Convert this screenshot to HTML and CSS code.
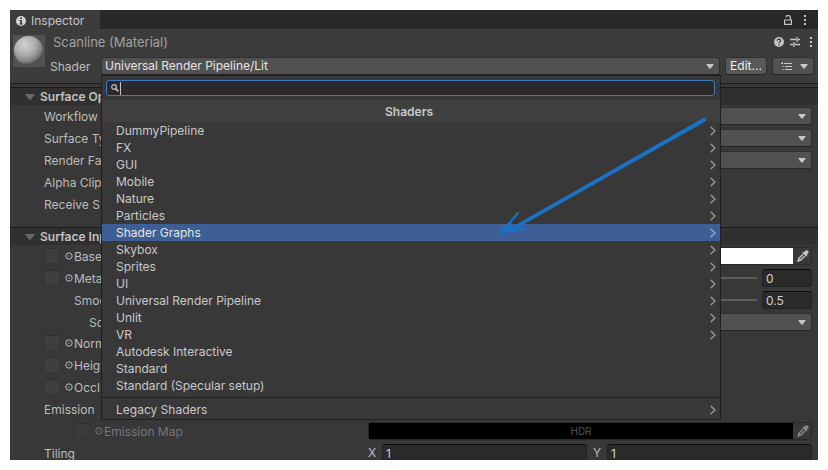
FILE: index.html
```html
<!DOCTYPE html>
<html lang="en">
<head>
<meta charset="utf-8">
<title>Inspector</title>
<meta name="viewport" content="width=device-width, initial-scale=1">
<link rel="stylesheet" href="styles.css">
</head>
<body>
<svg class="defs" aria-hidden="true">
  <symbol id="down" viewBox="0 0 8 5"><path d="M0 0h8L4.6 4.6h-1.2z"/></symbol>
  <symbol id="chev" viewBox="0 0 6 10"><path d="M.7.9 5 5 .7 9.1" fill="none" stroke="currentColor" stroke-width="1.5"/></symbol>
  <symbol id="dots" viewBox="0 0 2 10"><path d="M0 0h2v2H0zM0 4h2v2H0zM0 8h2v2H0z"/></symbol>
  <symbol id="target" viewBox="0 0 8 8"><circle cx="4" cy="4" r="3.2" fill="none" stroke="currentColor"/><circle cx="4" cy="4" r=".7"/></symbol>
  <symbol id="picker" viewBox="0 0 12 12"><path d="M8 .9C9.2-.2 10.400 0 11 .8s1 1.900-.1 3L9.700 5l.7.7-1.100 1.100L5.200 2.700l1.100-1.100.7.7z"/><path d="M5.900 4.300 1.900 8.300l-.6 2.400 2.400-.6 4-4" fill="none" stroke="currentColor" stroke-width="1.500"/><path d="M0 11.200h1.500V12H0z"/></symbol>
</svg>
<main class="panel">
  <div class="tabs">
    <a class="tab" href="#inspector">
      <svg width="10" height="10" viewBox="0 0 10 10"><circle cx="5" cy="5" r="5" fill="#d2d2d2"/><path d="M4.200 1.500h1.700v1.600H4.200zM3.500 4h2.400v3.400h.8v1H3.400v-1h.9V5h-.8z" fill="#333"/></svg>
      Inspector
    </a>
    <div class="tools">
      <button aria-label="Lock"><svg width="8" height="10" viewBox="0 0 8 10"><path d="M.6 5h6.800v4.400H.6zM6.400 5V2.200Q6.400.6 4.700.6H3.600Q2 .6 2 2.200" fill="none" stroke="currentColor" stroke-width="1.200"/></svg></button>
      <button aria-label="Tab menu"><svg width="2" height="10"><use href="#dots"/></svg></button>
    </div>
  </div>

  <header class="head">
    <svg class="preview" viewBox="0 0 32 32" aria-hidden="true">
      <defs><radialGradient id="ball" cx=".38" cy=".3" r=".72"><stop offset="0" stop-color="#d2d2d0"/><stop offset=".5" stop-color="#acacac"/><stop offset=".82" stop-color="#808080"/><stop offset="1" stop-color="#454545"/></radialGradient></defs>
      <rect width="32" height="32" fill="#525252"/><circle cx="15.500" cy="15.500" r="14.500" fill="url(#ball)"/>
    </svg>
    <div class="head-main">
      <div class="title-row">
        <h1>Scanline (Material)</h1>
        <button aria-label="Help"><svg width="10" height="10" viewBox="0 0 10 10"><circle cx="5" cy="5" r="5"/><path d="M3.300 3.700C3.300 1.600 6.700 1.600 6.700 3.600 6.700 4.800 5 4.800 5 6.200M5 7.200v1.200" fill="none" stroke="#383838" stroke-width="1.200"/></svg></button>
        <button aria-label="Presets"><svg width="10" height="10" viewBox="0 0 10 10"><path d="M0 2.500h6M8 2.500h2M0 7.500h3M5 7.500h5M7 0v5M4 5v5" fill="none" stroke="currentColor" stroke-width="1.300"/></svg></button>
        <button aria-label="Material menu"><svg width="2" height="10"><use href="#dots"/></svg></button>
      </div>
      <div class="shader-row">
        <label for="shader">Shader</label>
        <div class="shader-field">
          <div class="drop"><select id="shader"><option>Universal Render Pipeline/Lit</option></select><svg><use href="#down"/></svg></div>
          <div class="popup">
            <div class="search">
              <svg width="8" height="8" viewBox="0 0 8 8"><circle cx="3" cy="3" r="2.300" fill="none" stroke="currentColor" stroke-width="1.200"/><path d="m4.700 4.700 2.700 2.700" stroke="currentColor" stroke-width="1.500"/></svg>
              <i class="caret"></i>
              <input type="text" aria-label="Search shaders">
            </div>
            <h2>Shaders</h2>
            <div class="menu">
              <button>DummyPipeline<svg><use href="#chev"/></svg></button>
              <button>FX<svg><use href="#chev"/></svg></button>
              <button>GUI<svg><use href="#chev"/></svg></button>
              <button>Mobile<svg><use href="#chev"/></svg></button>
              <button>Nature<svg><use href="#chev"/></svg></button>
              <button>Particles<svg><use href="#chev"/></svg></button>
              <button class="selected">Shader Graphs<svg><use href="#chev"/></svg></button>
              <button>Skybox<svg><use href="#chev"/></svg></button>
              <button>Sprites<svg><use href="#chev"/></svg></button>
              <button>UI<svg><use href="#chev"/></svg></button>
              <button>Universal Render Pipeline<svg><use href="#chev"/></svg></button>
              <button>Unlit<svg><use href="#chev"/></svg></button>
              <button>VR<svg><use href="#chev"/></svg></button>
              <button>Autodesk Interactive</button>
              <button>Standard</button>
              <button>Standard (Specular setup)</button>
            </div>
            <div class="menu legacy"><button>Legacy Shaders<svg><use href="#chev"/></svg></button></div>
            <svg class="arrow" viewBox="0 0 210 120" aria-hidden="true"><path d="M206 .5Q209 2 207.500 4.500L15 113.500 13 110.500z"/><path d="M3 115.500 20 96M3 115.500 28 111.500" fill="none" stroke="currentColor" stroke-width="2.200" stroke-linecap="round"/><path d="m2 116.500 11-12 2 6 7 1.500-4 2z"/></svg>
          </div>
        </div>
        <button class="btn edit">Edit...</button>
        <button class="btn list" aria-label="Shader list"><svg width="11" height="9" viewBox="0 0 11 9"><path d="M3 1.500h8M4 4.500h7M4 7.500h7M0 1.500h2M1.500 0v2M1.500 4.500h1M1.500 7.500h1" fill="none" stroke="currentColor"/></svg><svg width="8" height="5"><use href="#down"/></svg></button>
      </div>
    </div>
  </header>

  <section>
    <h2 class="fold"><svg><use href="#down"/></svg>Surface Op</h2>
    <div class="rows">
      <div class="row"><label for="mode">Workflow</label><div class="drop"><select id="mode"></select><svg><use href="#down"/></svg></div></div>
      <div class="row"><label for="type">Surface Ty</label><div class="drop"><select id="type"></select><svg><use href="#down"/></svg></div></div>
      <div class="row"><label for="face">Render Fa</label><div class="drop"><select id="face"></select><svg><use href="#down"/></svg></div></div>
      <div class="row"><span>Alpha Clip</span></div>
      <div class="row"><span>Receive S</span></div>
    </div>
  </section>

  <section class="inputs">
    <h2 class="fold"><svg><use href="#down"/></svg>Surface Inp</h2>
    <div class="rows">
      <div class="row"><div class="tex"><button class="slot" aria-label="Base map"></button><svg><use href="#target"/></svg><span>Base</span></div><div class="color"><button class="swatch" aria-label="Base color"></button><button class="pick" aria-label="Pick base color"><svg><use href="#picker"/></svg></button></div></div>
      <div class="row"><div class="tex"><button class="slot" aria-label="Metallic map"></button><svg><use href="#target"/></svg><span>Meta</span></div><div class="slide"><i></i><input type="text" aria-label="Metallic" value="0"></div></div>
      <div class="row"><label class="in2" for="smooth">Smoo</label><div class="slide"><i></i><input type="text" id="smooth" value="0.5"></div></div>
      <div class="row source"><label class="in3" for="source">So</label><div class="drop"><select id="source"></select><svg><use href="#down"/></svg></div></div>
      <div class="row"><div class="tex"><button class="slot" aria-label="Normal map"></button><svg><use href="#target"/></svg><span>Norm</span></div></div>
      <div class="row"><div class="tex"><button class="slot" aria-label="Height map"></button><svg><use href="#target"/></svg><span>Heig</span></div></div>
      <div class="row"><div class="tex"><button class="slot" aria-label="Occlusion map"></button><svg><use href="#target"/></svg><span>Occl</span></div></div>
      <div class="row"><span>Emission</span></div>
      <div class="row off"><div class="tex in2"><button class="slot" aria-label="Emission texture"></button><svg><use href="#target"/></svg><span>Emission Map</span></div><div class="color"><button class="swatch">HDR</button><button class="pick" aria-label="Pick emission color"><svg><use href="#picker"/></svg></button></div></div>
      <div class="row"><span>Tiling</span><div class="vec"><label for="tx">X</label><input type="text" id="tx" value="1"><label for="ty">Y</label><input type="text" id="ty" value="1"></div></div>
    </div>
  </section>
</main>
</body>
</html>
```
FILE: styles.css
```css
* { box-sizing: border-box; }
body {
  margin: 0;
  padding: 10px;
  background: #fff;
  color: #bcbcbc;
  font: 12px/16px Inter, "Liberation Sans", sans-serif;
}
h1, h2 { margin: 0; font-size: 12px; }
button, input, select { font: inherit; color: inherit; margin: 0; padding: 0; border: 0; background: none; outline: 0; }
svg { display: block; fill: currentColor; flex: none; }
.defs { display: none; }

.panel { height: calc(100vh - 20px); overflow: hidden; background: #383838; }

.tabs { display: flex; justify-content: space-between; height: 19px; background: #282828; }
.tab {
  display: flex; align-items: center; gap: 5px;
  width: 90px; padding: 2px 0 0 6px;
  background: #3c3c3c; color: #c4c4c4; text-decoration: none;
}
.tools { display: flex; align-items: center; gap: 12px; padding-right: 12px; color: #c4c4c4; }

.head { display: flex; gap: 5px; height: 55px; padding: 5px 4px 0 3px; background: #3c3c3c; border-bottom: 1px solid #1a1a1a; }
.preview { width: 32px; height: 32px; margin-top: 1px; }
.head-main { flex: 1; min-width: 0; }
.title-row { display: flex; align-items: center; gap: 6px; height: 16px; padding: 0 2px 0 3px; color: #c4c4c4; }
.title-row h1 { flex: 1; font-size: 13px; font-weight: 400; color: #a0a0a0; }
.title-row button:last-child { margin-left: 4px; }
.shader-row { display: flex; gap: 5px; margin-top: 7px; }
.shader-row > label { width: 46px; padding-top: 2px; }
.shader-field { position: relative; flex: 1; }

.drop { position: relative; height: 18px; }
.drop select {
  display: block; width: 100%; height: 18px; padding-left: 4px;
  appearance: none; background: #515151; color: #e4e4e4;
  border: 1px solid #303030; border-bottom-color: #242424; border-radius: 3px;
}
.drop svg { position: absolute; right: 6px; top: 7px; width: 8px; height: 5px; color: #c8c8c8; }
.shader-field .drop select { padding-left: 3px; }
.btn {
  width: 43px; height: 18px; background: #585858; color: #eee;
  border: 1px solid #303030; border-bottom-color: #242424; border-radius: 3px;
}
.shader-row .btn { width: 42px; }
.list { display: flex; align-items: center; justify-content: space-between; padding: 0 5px 0 8px; color: #c8c8c8; background: #515151; }

.popup {
  position: absolute; z-index: 2; top: 18px; left: 0; right: -1px;
  padding-top: 4px; background: #383838; border: 1px solid #202020;
}
.search {
  display: flex; align-items: center; gap: 1px; height: 16px; margin: 0 5px 4px 4px; padding-left: 4px;
  background: #2a2a2a; border: 1px solid #3a79bb; border-radius: 3px; color: #c4c4c4;
}
.search input { flex: 1; min-width: 0; height: 14px; }
.caret { width: 1px; height: 13px; background: #c4c4c4; }
.popup h2 { height: 22px; padding: 4px 4px 0 0; background: #404040; text-align: center; font-weight: 600; color: #c8c8c8; }
.menu { padding-bottom: 3px; }
.menu button { display: flex; align-items: center; justify-content: space-between; width: 100%; height: 17px; padding: 0 4px 0 14px; color: #c8c8c8; }
.menu svg { width: 6px; height: 10px; color: #919191; }
.menu .selected { background: #3e5f96; color: #e6e6e6; }
.menu .selected svg { color: #91a4c4; }
.legacy { padding: 3px 0 1px; border-top: 1px solid #202020; }
.arrow { position: absolute; top: 41px; right: 12px; width: 210px; height: 120px; color: #1b72c4; pointer-events: none; }

section { margin-top: 3px; }
.inputs { margin-top: 12px; }
.fold { display: flex; align-items: center; gap: 5px; height: 18px; padding: 1px 0 0 15px; background: #303030; border-top: 1px solid #1a1a1a; font-weight: 600; color: #c4c4c4; }
.fold svg { width: 10px; height: 8px; color: #696969; }
.rows { padding: 0 6px 0 34px; }
.row { display: grid; grid-template-columns: 324px 1fr; align-items: center; height: 22px; }
.row > label, .row span { padding-top: 2px; }
.source { height: 21px; }
.in2 { padding-left: 30px; }
.in3 { padding-left: 45px; }
.tex { display: flex; align-items: center; }
.tex svg { width: 8px; height: 8px; margin: 0 1px 0 5px; }
.slot { width: 16px; height: 16px; background: #3e3e3e; border: 1px solid #353535; border-top-color: #303030; }
.color { display: flex; height: 18px; border: 1px solid #282828; border-radius: 3px; }
.swatch { flex: 1; background: #fff; font-size: 10px; color: #555; }
.pick { width: 18px; padding-left: 4px; color: #c4c4c4; }
.pick svg { width: 12px; height: 12px; }
.slide { display: flex; align-items: center; gap: 5px; }
.slide i { flex: 1; height: 2px; background: #5e5e5e; }
.slide input, .vec input { width: 50px; height: 18px; padding-left: 3px; background: #2a2a2a; border: 1px solid #212121; border-top-color: #0d0d0d; border-radius: 3px; color: #d2d2d2; }
.off { color: #777; }
.off .slot { background: #3b3b3b; }
.off .swatch { background: #000; }
.off .pick { color: #888; }
.vec { display: grid; grid-template-columns: 8px 1fr 8px 1fr; gap: 6px; align-items: center; }
.vec input { width: 100%; }
```
